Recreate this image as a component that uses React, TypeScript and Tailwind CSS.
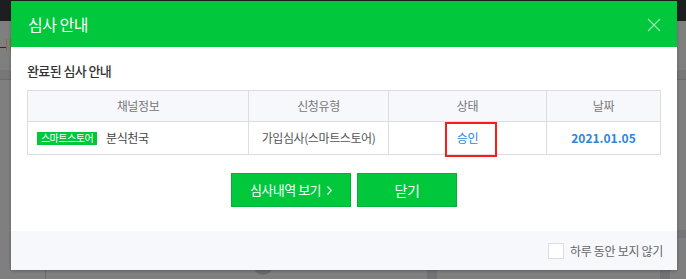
import React from "react";

const font = "font-['Noto_Sans_CJK_KR','Noto_Sans',sans-serif]";

export default function App() {
  return (
    <div className={`relative w-[686px] h-[279px] overflow-hidden bg-[#7f7f7f] ${font}`}>
      {/* dimmed page behind */}
      <div className="absolute left-0 top-0 w-full h-[21px] bg-[#1c1e21]" />
      <div className="absolute left-0 top-[47px] w-[6px] h-px bg-[#2a2a2a]" />
      <div className="absolute left-[6px] top-[39px] w-px h-[12px] bg-[#8a6a3a]" />
      <div className="absolute left-[10px] top-[39px] w-px h-[12px] bg-[#8a6a3a]" />
      <div className="absolute left-0 top-[70px] w-full h-[9px] bg-[#777779]" />
      <div className="absolute left-0 top-[79px] w-full h-px bg-[#6c6c6e]" />
      <div className="absolute left-[600px] top-[230px] w-[86px] h-[8px] bg-[#767678]" />
      <div className="absolute left-[45px] top-[262px] w-px h-[17px] bg-[#6a6a6a]" />
      <div className="absolute left-[253px] top-[255px] w-[20px] h-[20px] rounded-full bg-[#6b6b6d]" />
      <div className="absolute left-[427px] top-[268px] w-[10px] h-[11px] bg-[#727274]" />
      <div className="absolute left-[660px] top-[268px] w-[10px] h-[11px] bg-[#727274]" />

      {/* modal */}
      <div className="absolute left-[11px] top-[1px] w-[666px] h-[269px] bg-white flex flex-col shadow-[0_1px_3px_rgba(0,0,0,0.25)]">
        <div className="h-[46px] bg-[#00c73c] flex items-center justify-between pl-[17px] pr-[16px]">
          <span className="text-white text-[16px] tracking-[-0.5px] leading-none">심사 안내</span>
          <svg width="14" height="14" viewBox="0 0 14 14" className="mt-[1px]">
            <path d="M1 1 L13 13 M13 1 L1 13" stroke="rgba(255,255,255,0.6)" strokeWidth="1.2" fill="none" />
          </svg>
        </div>

        <div className="flex-1 flex flex-col pl-[16px] pr-[17px] pt-[14px]">
          <div className="h-[20px] flex items-center text-[13px] font-medium text-[#333] tracking-[-0.6px]">
            완료된 심사 안내
          </div>

          <div className="relative mt-[9px]">
            <table className="w-[633px] border-collapse table-fixed text-[12px] tracking-[-0.4px]">
              <colgroup>
                <col className="w-[221px]" />
                <col className="w-[140px]" />
                <col className="w-[158px]" />
                <col className="w-[114px]" />
              </colgroup>
              <thead>
                <tr className="h-[31px] bg-[#f7f8fc] text-[#777]">
                  <th className="border border-[#dcdde3] font-normal">채널정보</th>
                  <th className="border border-[#dcdde3] font-normal">신청유형</th>
                  <th className="border border-[#dcdde3] font-normal">상태</th>
                  <th className="border border-[#dcdde3] font-normal">날짜</th>
                </tr>
              </thead>
              <tbody>
                <tr className="h-[33px]">
                  <td className="border border-[#dcdde3] pl-[9px]">
                    <div className="flex items-center">
                      <span className="inline-flex items-center justify-center w-[60px] h-[13px] bg-[#00c73c] text-white text-[10px] leading-none tracking-[-0.5px]">
                        스마트스토어
                      </span>
                      <span className="ml-[9px] text-[#444]">분식천국</span>
                    </div>
                  </td>
                  <td className="border border-[#dcdde3] text-center text-[#555]">가입심사(스마트스토어)</td>
                  <td className="border border-[#dcdde3] text-center text-[#2b86e0]">승인</td>
                  <td className="border border-[#dcdde3] text-center text-[#2b86e0] font-semibold tracking-[0px]">2021.01.05</td>
                </tr>
              </tbody>
            </table>
            <div className="absolute left-[418px] top-[32px] w-[52px] h-[35px] border-2 border-[#ff1a1a]" />
          </div>

          <div className="mt-[18px] flex justify-center gap-[6px] pl-px">
            <button className="w-[120px] h-[34px] bg-[#00c73c] border border-[#00b336] text-white text-[13px] tracking-[-0.5px] flex items-center justify-center gap-[6px]">
              <span>심사내역 보기</span>
              <svg width="5" height="9" viewBox="0 0 5 9">
                <path d="M0.5 0.5 L4.3 4.5 L0.5 8.5" stroke="white" strokeWidth="1.1" fill="none" />
              </svg>
            </button>
            <button className="w-[100px] h-[34px] bg-[#00c73c] border border-[#00b336] text-white text-[14px] tracking-[-0.5px]">
              닫기
            </button>
          </div>
        </div>

        <div className="h-[39px] bg-[#f7f8fc] flex items-center justify-end pr-[14px]">
          <span className="w-[16px] h-[16px] bg-white border border-[#dcdde3]" />
          <span className="ml-[6px] text-[12px] text-[#666] tracking-[-0.3px]">하루 동안 보지 않기</span>
        </div>
      </div>
    </div>
  );
}
